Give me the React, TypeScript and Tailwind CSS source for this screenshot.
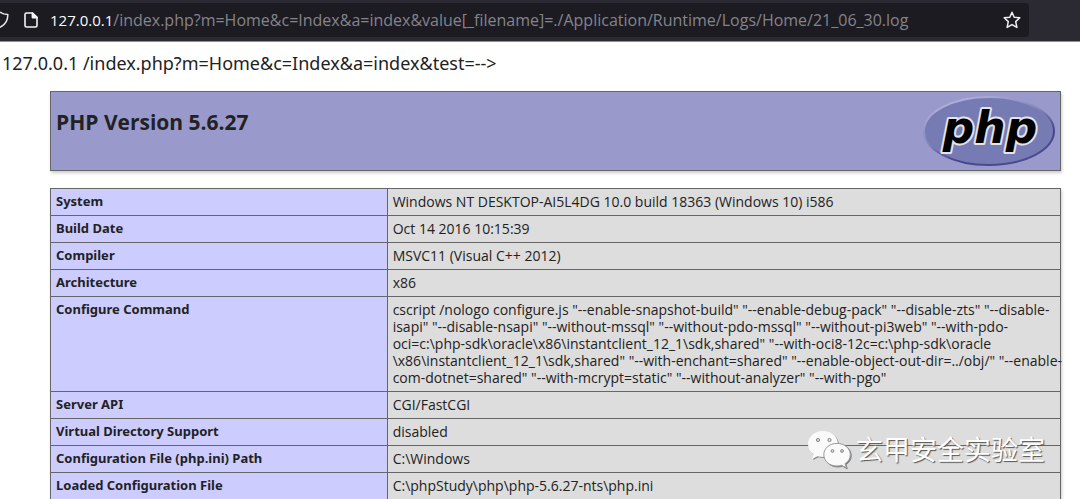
import React from "react";

const rows: { name: string; value: string[] }[] = [
  { name: "System", value: ["Windows NT DESKTOP-AI5L4DG 10.0 build 18363 (Windows 10) i586"] },
  { name: "Build Date", value: ["Oct 14 2016 10:15:39"] },
  { name: "Compiler", value: ["MSVC11 (Visual C++ 2012)"] },
  { name: "Architecture", value: ["x86"] },
  {
    name: "Configure Command",
    value: [
      'cscript /nologo configure.js "--enable-snapshot-build" "--enable-debug-pack" "--disable-zts" "--disable-',
      'isapi" "--disable-nsapi" "--without-mssql" "--without-pdo-mssql" "--without-pi3web" "--with-pdo-',
      'oci=c:\\php-sdk\\oracle\\x86\\instantclient_12_1\\sdk,shared" "--with-oci8-12c=c:\\php-sdk\\oracle',
      '\\x86\\instantclient_12_1\\sdk,shared" "--with-enchant=shared" "--enable-object-out-dir=../obj/" "--enable-',
      'com-dotnet=shared" "--with-mcrypt=static" "--without-analyzer" "--with-pgo"',
    ],
  },
  { name: "Server API", value: ["CGI/FastCGI"] },
  { name: "Virtual Directory Support", value: ["disabled"] },
  { name: "Configuration File (php.ini) Path", value: ["C:\\Windows"] },
  { name: "Loaded Configuration File", value: ["C:\\phpStudy\\php\\php-5.6.27-nts\\php.ini"] },
];

function PhpLogo() {
  return (
    <svg width="132" height="71" viewBox="0 0 132 71" role="img" aria-label="PHP logo" className="shrink-0">
      <defs>
        <linearGradient id="rim" x1="0.2" y1="0" x2="0.8" y2="1">
          <stop offset="0" stopColor="#b5b7df" />
          <stop offset="0.45" stopColor="#8082b9" />
          <stop offset="0.7" stopColor="#45468c" />
          <stop offset="1" stopColor="#4a4b92" />
        </linearGradient>
      </defs>
      <ellipse cx="66" cy="36" rx="65" ry="34" fill="#777bb3" stroke="url(#rim)" strokeWidth="2" />
      <text
        x="67"
        y="48"
        textAnchor="middle"
        fontSize="44"
        fontWeight="700"
        fontStyle="italic"
        fill="#000"
        stroke="#e4e4ea"
        strokeWidth="4"
        strokeLinejoin="round"
        paintOrder="stroke"
        className="font-['DejaVu_Sans',sans-serif]"
      >
        php
      </text>
    </svg>
  );
}

function AddressBar() {
  return (
    <header className="flex h-[42px] items-start border-b border-[#8f8f94] bg-[#2b2a33] pt-[3px]">
      <div className="mr-[51px] flex h-[34px] grow items-center rounded-r bg-[#1c1b22] pr-2">
        <svg width="10" height="20" viewBox="0 0 10 20" fill="none" stroke="#e8e8ea" strokeWidth="1.5" className="shrink-0">
          <path d="M0 2.2C2.5 3.8 5 4.4 7.8 4.5C8 10.5 5.5 14.5 0 17.4" strokeLinejoin="round" />
        </svg>
        <svg width="14" height="16" viewBox="0 0 14 16" fill="none" stroke="#f4f4f5" strokeWidth="1.6" strokeLinejoin="round" className="ml-[14px] shrink-0">
          <path d="M2.6 1H8.4L13 5.4V13.4Q13 15 11.4 15H2.6Q1 15 1 13.4V2.6Q1 1 2.6 1Z" />
          <path d="M8.4 1V5.6H13Z" fill="#f4f4f5" />
        </svg>
        <label htmlFor="url" className="ml-3 text-[15px] text-[#fbfbfe]">127.0.0.1</label>
        <input
          id="url"
          type="text"
          defaultValue="/index.php?m=Home&c=Index&a=index&value[_filename]=./Application/Runtime/Logs/Home/21_06_30.log"
          className="min-w-0 grow bg-transparent text-[16px] text-[#85848b] outline-none"
        />
        <button type="button" aria-label="Bookmark this page" className="shrink-0">
          <svg width="18" height="18" viewBox="0 0 18 18" fill="none" stroke="#f0f0f2" strokeWidth="1.5" strokeLinejoin="round">
            <path d="M9 1.2L11.2 6.2L16.8 6.8L12.7 10.6L13.9 16.4L9 13.6L4.1 16.4L5.3 10.6L1.2 6.8L6.8 6.2Z" />
          </svg>
        </button>
      </div>
    </header>
  );
}

function Watermark() {
  return (
    <div className="absolute top-[429px] right-[35px] flex items-center gap-1">
      <svg width="46" height="40" viewBox="0 0 46 40" className="drop-shadow-[1px_1px_0px_#858585]">
        <path d="M17 2C8.500 2 2 7.800 2 15.200C2 19.500 4.200 22.800 7.600 25.200L6 30L11.600 27.200C13.300 27.800 15 28 17 28C25.500 28 32 22.500 32 15.200C32 7.800 25.500 2 17 2Z" fill="#fafafa" />
        <path d="M31 14.400C23.500 14.400 17.800 19.300 17.800 25.700C17.800 32 23.500 37 31 37C32.700 37 34.200 36.700 35.600 36.300L40.300 38.800L39 34.700C42.300 32.500 44.300 29.500 44.300 25.700C44.300 19.300 38.500 14.400 31 14.400Z" fill="#fafafa" stroke="#999" strokeWidth="1" />
        <g fill="#ddd" stroke="#888" strokeWidth="1">
          <circle cx="12" cy="11" r="1.600" />
          <circle cx="23.500" cy="11" r="1.600" />
          <circle cx="26.500" cy="22" r="1.400" />
          <circle cx="36" cy="22" r="1.400" />
        </g>
      </svg>
      <span className="font-['Noto_Sans_CJK_SC',sans-serif] text-[27px] leading-[40px] whitespace-nowrap text-white [text-shadow:1px_1px_1px_#555]">
        玄甲安全实验室
      </span>
    </div>
  );
}

export default function App() {
  return (
    <div className="relative h-screen overflow-hidden bg-white font-['Open_Sans','Noto_Sans_CJK_SC',sans-serif] text-[#222]">
      <AddressBar />
      <p className="px-0.5 pt-2 font-['Noto_Sans',sans-serif] text-[18px] leading-[26px]">127.0.0.1 /index.php?m=Home&amp;c=Index&amp;a=index&amp;test=--&gt;</p>
      <main className="mt-[15px] mr-[19px] ml-[50px]">
        <div className="flex h-20 items-start justify-between border border-[#666] bg-[#9999cc] px-[5px] pt-[3px] shadow-[1px_2px_3px_#ccc]">
          <h1 className="pt-3 text-[21px] leading-[30px] font-bold">PHP Version 5.6.27</h1>
          <PhpLogo />
        </div>
        <table className="mt-[17px] w-full table-fixed border-collapse text-[14px] leading-[17px] shadow-[1px_2px_3px_#ccc]">
          <tbody>
            {rows.map((row) => (
              <tr key={row.name}>
                <th scope="row" className="w-1/3 border border-[#666] bg-[#ccccff] px-[5px] pt-1 pb-[5px] text-left align-top font-['Noto_Sans',sans-serif] text-[13px] font-bold">
                  {row.name}
                </th>
                <td className="border border-[#666] bg-[#dddddd] px-[5px] pt-1 pb-[5px] align-top">
                  {row.value.map((line) => (
                    <div key={line} className="whitespace-nowrap">{line}</div>
                  ))}
                </td>
              </tr>
            ))}
          </tbody>
        </table>
      </main>
      <Watermark />
    </div>
  );
}
